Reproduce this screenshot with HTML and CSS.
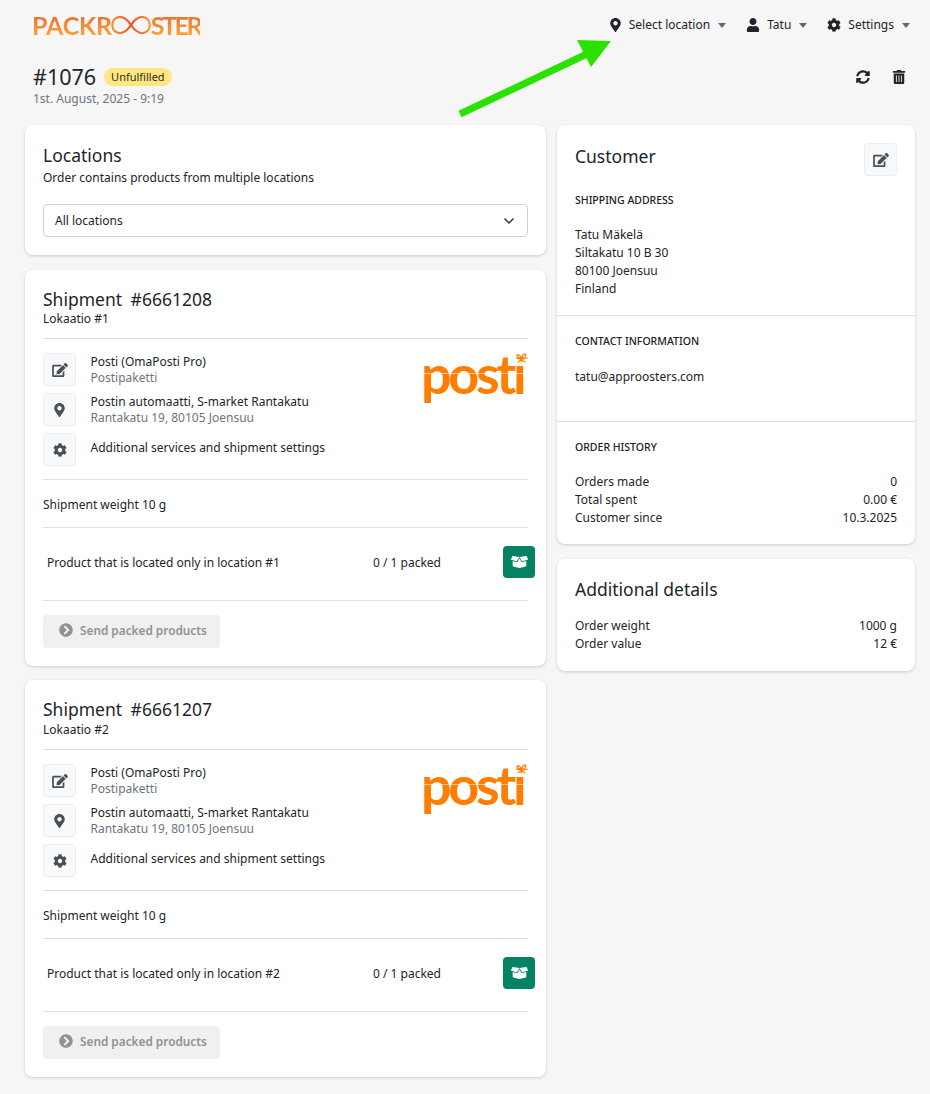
FILE: index.html
```html
<!DOCTYPE html>
<html lang="en">
<head>
<meta charset="utf-8">
<title>Order #1076</title>
<link rel="stylesheet" href="styles.css">
</head>
<body>
<svg class="defs" aria-hidden="true">
  <defs>
    <linearGradient id="logo-grad" gradientUnits="userSpaceOnUse" x1="0" y1="0" x2="40" y2="0"><stop offset="0" stop-color="#f59a3c"/><stop offset=".5" stop-color="#e4552a"/><stop offset="1" stop-color="#f8a03c"/></linearGradient>
    <symbol id="i-pin" viewBox="0 0 384 512"><path d="M172.268 501.67C26.97 291.031 0 262.429 0 192 0 85.961 85.961 0 192 0s192 85.961 192 192c0 70.429-26.97 99.031-172.268 309.67-9.535 13.774-29.93 13.773-39.464 0zM192 272c44.183 0 80-35.817 80-80s-35.817-80-80-80-80 35.817-80 80 35.817 80 80 80z"/></symbol>
    <symbol id="i-user" viewBox="0 0 448 512"><path d="M224 256c70.7 0 128-57.3 128-128S294.7 0 224 0 96 57.3 96 128s57.3 128 128 128zm89.6 32h-16.7c-22.2 10.2-46.9 16-72.9 16s-50.6-5.8-72.9-16h-16.7C60.2 288 0 348.2 0 422.4V464c0 26.5 21.5 48 48 48h352c26.5 0 48-21.5 48-48v-41.6c0-74.2-60.2-134.4-134.4-134.4z"/></symbol>
    <symbol id="i-cog" viewBox="0 0 512 512"><path d="M487.4 315.7l-42.6-24.6c4.3-23.2 4.3-47 0-70.2l42.6-24.6c4.9-2.8 7.1-8.6 5.5-14-11.1-35.6-30-67.8-54.7-94.6-3.8-4.1-10-5.1-14.8-2.3L380.8 110c-17.9-15.4-38.5-27.3-60.8-35.1V25.8c0-5.6-3.9-10.5-9.4-11.7-36.7-8.2-74.3-7.8-109.2 0-5.5 1.2-9.4 6.1-9.4 11.7V75c-22.2 7.9-42.8 19.8-60.8 35.1L88.7 85.5c-4.9-2.8-11-1.9-14.8 2.3-24.7 26.7-43.6 58.9-54.7 94.6-1.7 5.4.6 11.2 5.5 14L67.3 221c-4.3 23.2-4.3 47 0 70.2l-42.6 24.6c-4.9 2.8-7.1 8.6-5.5 14 11.1 35.6 30 67.8 54.7 94.6 3.8 4.1 10 5.1 14.8 2.3l42.6-24.6c17.9 15.4 38.5 27.3 60.8 35.1v49.2c0 5.6 3.9 10.5 9.4 11.7 36.7 8.2 74.3 7.8 109.2 0 5.5-1.2 9.4-6.1 9.4-11.7v-49.2c22.2-7.9 42.8-19.8 60.8-35.1l42.6 24.6c4.9 2.8 11 1.9 14.8-2.3 24.7-26.7 43.6-58.9 54.7-94.6 1.5-5.5-.7-11.3-5.6-14.1zM256 336c-44.1 0-80-35.9-80-80s35.9-80 80-80 80 35.9 80 80-35.9 80-80 80z"/></symbol>
    <symbol id="i-sync" viewBox="0 0 512 512"><path d="M370.72 133.28C339.458 104.008 298.888 87.962 255.848 88c-77.458.068-144.328 53.178-162.791 126.85-1.344 5.363-6.122 9.15-11.651 9.15H24.103c-7.498 0-13.194-6.807-11.807-14.176C33.933 94.924 134.813 8 256 8c66.448 0 126.791 26.136 171.315 68.685L463.03 40.97C478.149 25.851 504 36.559 504 57.941V192c0 13.255-10.745 24-24 24H345.941c-21.382 0-32.09-25.851-16.971-40.971l41.75-41.749zM32 296h134.059c21.382 0 32.09 25.851 16.971 40.971l-41.75 41.75c31.262 29.273 71.835 45.319 114.876 45.28 77.418-.07 144.315-53.144 162.787-126.849 1.344-5.363 6.122-9.15 11.651-9.15h57.304c7.498 0 13.194 6.807 11.807 14.176C478.067 417.076 377.187 504 256 504c-66.448 0-126.791-26.136-171.315-68.685L48.97 471.03C33.851 486.149 8 475.441 8 454.059V320c0-13.255 10.745-24 24-24z"/></symbol>
    <symbol id="i-trash" viewBox="0 0 448 512"><path d="M32 464a48 48 0 0 0 48 48h288a48 48 0 0 0 48-48V128H32zm272-256a16 16 0 0 1 32 0v224a16 16 0 0 1-32 0zm-96 0a16 16 0 0 1 32 0v224a16 16 0 0 1-32 0zm-96 0a16 16 0 0 1 32 0v224a16 16 0 0 1-32 0zM432 32H312l-9.4-18.7A24 24 0 0 0 281.1 0H166.8a23.72 23.72 0 0 0-21.4 13.3L136 32H16A16 16 0 0 0 0 48v32a16 16 0 0 0 16 16h416a16 16 0 0 0 16-16V48a16 16 0 0 0-16-16z"/></symbol>
    <symbol id="i-edit" viewBox="0 0 576 512"><path d="M402.6 83.2l90.2 90.2c3.8 3.8 3.8 10 0 13.8L274.4 405.6l-92.8 10.3c-12.4 1.4-22.9-9.1-21.5-21.5l10.3-92.8L388.8 83.2c3.8-3.8 10-3.8 13.8 0zm162-22.9l-48.8-48.8c-15.2-15.2-39.9-15.2-55.2 0l-35.4 35.4c-3.8 3.8-3.8 10 0 13.8l90.2 90.2c3.8 3.8 10 3.8 13.8 0l35.4-35.4c15.2-15.3 15.2-40 0-55.2zM384 346.2V448H64V128h229.8c3.2 0 6.2-1.3 8.5-3.5l40-40c7.6-7.6 2.2-20.5-8.5-20.5H48C21.5 64 0 85.5 0 112v352c0 26.5 21.5 48 48 48h352c26.5 0 48-21.5 48-48V306.2c0-10.7-12.9-16-20.5-8.5l-40 40c-2.2 2.3-3.5 5.3-3.5 8.5z"/></symbol>
    <symbol id="i-next" viewBox="0 0 512 512"><path d="M256 8c137 0 248 111 248 248S393 504 256 504 8 393 8 256 119 8 256 8zm113.9 231L234.4 103.5c-9.4-9.4-24.6-9.4-33.9 0l-17 17c-9.4 9.4-9.4 24.6 0 33.9L285.1 256 183.5 357.6c-9.4 9.4-9.4 24.6 0 33.9l17 17c9.4 9.4 24.6 9.4 33.9 0L369.9 273c9.4-9.4 9.4-24.6 0-34z"/></symbol>
    <symbol id="i-box" viewBox="0 0 640 512"><path d="M425.7 256c-16.9 0-32.8-9-41.4-23.4L320 126l-64.2 106.6c-8.7 14.5-24.6 23.5-41.5 23.5-4.5 0-9-.6-13.3-1.9L64 215v178c0 14.7 10 27.5 24.2 31l216.2 54.1c10.2 2.5 20.9 2.5 31 0L551.8 424c14.2-3.6 24.2-16.4 24.2-31V215l-137 39.1c-4.3 1.3-8.8 1.9-13.3 1.9zm212.6-112.2L586.8 41c-3.1-6.2-9.8-9.8-16.7-8.9L320 64l91.7 152.1c3.8 6.3 11.4 9.3 18.5 7.3l197.9-56.5c9.9-2.9 14.7-13.9 10.2-23.1zM53.2 41L1.7 143.8c-4.6 9.2.3 20.2 10.1 23l197.9 56.5c7.1 2 14.7-1 18.5-7.3L320 64 69.8 32.1c-6.9-.8-13.5 2.7-16.6 8.9z"/></symbol>
    <symbol id="i-bow" viewBox="0 0 24 16"><path d="M12 15 L12 8 M12 8 C8 1 4 2 5 5 C6 8 10 8 12 8 M12 8 C14 1 19 0 19 3 C19 7 14 8 12 8 M11 10 L3 8 M13 10 L22 8 M11 11 L6 15 M13 11 L18 15" fill="none" stroke="#ff7d00" stroke-width="2"/></symbol>
  </defs>
</svg>

<header class="topbar">
  <div class="logo">
    <span class="logo-text packr">PACKR</span>
    <svg class="logo-loop" viewBox="0 0 40 18"><path d="M20 9 C16 3 12.500 1 9 1 C4.500 1 1.200 4.500 1.200 9 C1.200 13.500 4.500 17 9 17 C12.500 17 16 15 20 9 C24 3 27.500 1 31 1 C35.500 1 38.800 4.500 38.800 9 C38.800 13.500 35.500 17 31 17 C27.500 17 24 15 20 9 Z" fill="none" stroke="url(#logo-grad)" stroke-width="2.200"/></svg>
    <span class="logo-text ster">STER</span>
  </div>
  <nav class="nav">
    <a class="nav-item"><svg class="nav-icon pin"><use href="#i-pin"/></svg><span>Select location</span><i class="caret"></i></a>
    <a class="nav-item"><svg class="nav-icon"><use href="#i-user"/></svg><span>Tatu</span><i class="caret"></i></a>
    <a class="nav-item"><svg class="nav-icon"><use href="#i-cog"/></svg><span>Settings</span><i class="caret"></i></a>
  </nav>
</header>

<svg class="arrow" viewBox="0 0 170 90"><path d="M1 73 L130 12" stroke="#2be100" stroke-width="7" fill="none"/><path d="M118 -1 L152 0 L132 26 Z" fill="#2be100"/></svg>

<section class="order-head">
  <div>
    <div class="order-title"><h1>#1076</h1><span class="badge">Unfulfilled</span></div>
    <div class="order-date">1st. August, 2025 - 9:19</div>
  </div>
  <div class="order-actions">
    <svg class="act"><use href="#i-sync"/></svg>
    <svg class="act"><use href="#i-trash"/></svg>
  </div>
</section>

<main class="columns">
  <div class="col">
    <section class="card pad">
      <h2>Locations</h2>
      <p class="sub">Order contains products from multiple locations</p>
      <div class="select"><span>All locations</span>
        <svg class="chev" viewBox="0 0 12 8"><path d="M1.500 1.500 L6 6 L10.500 1.500" fill="none" stroke="#343a40" stroke-width="1.500"/></svg>
      </div>
    </section>

    <section class="card pad shipment">
      <h2 class="ship-title">Shipment #6661208</h2>
      <p class="ship-loc">Lokaatio #1</p>
      <div class="carrier">
        <div class="carrier-rows">
          <div class="crow"><span class="ibtn"><svg class="ic-edit"><use href="#i-edit"/></svg></span><div><div>Posti (OmaPosti Pro)</div><div class="muted">Postipaketti</div></div></div>
          <div class="crow"><span class="ibtn"><svg class="ic-pin"><use href="#i-pin"/></svg></span><div><div>Postin automaatti, S-market Rantakatu</div><div class="muted">Rantakatu 19, 80105 Joensuu</div></div></div>
          <div class="crow"><span class="ibtn"><svg class="ic-cog"><use href="#i-cog"/></svg></span><div class="single">Additional services and shipment settings</div></div>
        </div>
        <div class="posti"><span>posti</span><svg class="bow"><use href="#i-bow"/></svg></div>
      </div>
      <div class="weight">Shipment weight 10 g</div>
      <div class="product"><span class="pname">Product that is located only in location #1</span><span class="pcount">0 / 1 packed</span><span class="pack"><svg><use href="#i-box"/></svg></span></div>
      <div class="send-row"><span class="send"><svg><use href="#i-next"/></svg>Send packed products</span></div>
    </section>

    <section class="card pad shipment">
      <h2 class="ship-title">Shipment #6661207</h2>
      <p class="ship-loc">Lokaatio #2</p>
      <div class="carrier">
        <div class="carrier-rows">
          <div class="crow"><span class="ibtn"><svg class="ic-edit"><use href="#i-edit"/></svg></span><div><div>Posti (OmaPosti Pro)</div><div class="muted">Postipaketti</div></div></div>
          <div class="crow"><span class="ibtn"><svg class="ic-pin"><use href="#i-pin"/></svg></span><div><div>Postin automaatti, S-market Rantakatu</div><div class="muted">Rantakatu 19, 80105 Joensuu</div></div></div>
          <div class="crow"><span class="ibtn"><svg class="ic-cog"><use href="#i-cog"/></svg></span><div class="single">Additional services and shipment settings</div></div>
        </div>
        <div class="posti"><span>posti</span><svg class="bow"><use href="#i-bow"/></svg></div>
      </div>
      <div class="weight">Shipment weight 10 g</div>
      <div class="product"><span class="pname">Product that is located only in location #2</span><span class="pcount">0 / 1 packed</span><span class="pack"><svg><use href="#i-box"/></svg></span></div>
      <div class="send-row"><span class="send"><svg><use href="#i-next"/></svg>Send packed products</span></div>
    </section>
  </div>

  <div class="col">
    <section class="card customer">
      <div class="cust-sec first">
        <div class="cust-head"><h2>Customer</h2><span class="ibtn"><svg class="ic-edit"><use href="#i-edit"/></svg></span></div>
        <h3>SHIPPING ADDRESS</h3>
        <p>Tatu Mäkelä<br>Siltakatu 10 B 30<br>80100 Joensuu<br>Finland</p>
      </div>
      <div class="cust-sec contact">
        <h3>CONTACT INFORMATION</h3>
        <p>tatu@approosters.com</p>
      </div>
      <div class="cust-sec history">
        <h3>ORDER HISTORY</h3>
        <dl class="kv"><dt>Orders made</dt><dd>0</dd><dt>Total spent</dt><dd>0.00 €</dd><dt>Customer since</dt><dd>10.3.2025</dd></dl>
      </div>
    </section>
    <section class="card pad details">
      <h2>Additional details</h2>
      <dl class="kv"><dt>Order weight</dt><dd>1000 g</dd><dt>Order value</dt><dd>12 €</dd></dl>
    </section>
  </div>
</main>
</body>
</html>
```

FILE: styles.css
```css
* { box-sizing: border-box; }
html, body { margin: 0; padding: 0; }
body {
  position: relative;
  background: #f6f6f6;
  color: #212529;
  font: 12px/18px "Noto Sans", sans-serif;
  min-height: 1094px;
  overflow: hidden;
}
.defs { position: absolute; width: 0; height: 0; }
h1, h2, h3, p, dl, dd { margin: 0; font-weight: 400; }

.topbar { height: 48px; display: flex; justify-content: space-between; align-items: center; padding: 1px 20px 0 32px; }
.logo { display: flex; align-items: center; height: 22px; margin-top: 1px; }
.logo-text {
  font: 700 25px/22px Lato, sans-serif;
  background: linear-gradient(#ec6b30, #fda537);
  -webkit-background-clip: text;
  background-clip: text;
  color: transparent;
}
.packr { letter-spacing: -.2px; }
.ster { letter-spacing: -2.500px; }
.logo-loop { width: 40px; height: 18px; margin: 0 0 0 -1px; }
.nav { display: flex; gap: 20px; align-items: center; }
.nav-item { display: flex; align-items: center; color: #212529; }
.nav-icon { width: 14px; height: 14px; margin-right: 7px; fill: #212529; }
.nav-icon.pin { width: 11px; margin-right: 8px; }
.caret { width: 0; height: 0; margin: 2px 0 0 8px; border: 4px solid transparent; border-top: 5px solid #666; border-bottom: 0; }

.arrow { position: absolute; left: 459px; top: 41px; width: 170px; height: 90px; overflow: visible; }

.order-head { display: flex; justify-content: space-between; padding: 16px 24px 0 33px; height: 77px; }
.order-title { display: flex; align-items: center; height: 26px; }
.order-title h1 { font-size: 21.500px; line-height: 26px; }
.badge { margin-left: 8px; background: #ffe680; color: #2e2e1a; font-size: 11px; line-height: 18px; height: 18px; padding: 0 7px; border-radius: 9px; }
.order-date { color: #6c757d; font-size: 12px; line-height: 18px; }
.order-actions { display: flex; gap: 22px; padding-top: 6px; }
.act { width: 14px; height: 14px; fill: #212529; }

.columns { display: grid; grid-template-columns: 521px 358px; gap: 11px; padding-left: 25px; }
.col { display: flex; flex-direction: column; gap: 15px; align-items: stretch; }
.card { background: #fff; border-radius: 8px; box-shadow: 0 1px 3px rgba(0,0,0,.18); }
.pad { padding: 18px; }
h2 { font-size: 17.500px; line-height: 24px; }
.sub { line-height: 22px; }
.select {
  display: flex; justify-content: space-between; align-items: center;
  height: 33px; margin-top: 15px; padding: 0 12px 0 11px;
  border: 1px solid #ced4da; border-radius: 4px; background: #fff;
}
.chev { width: 12px; height: 8px; }

.ship-title { word-spacing: 4px; margin-top: -1px; }
.ship-loc { line-height: 14px; margin-top: 1px; padding-bottom: 12px; border-bottom: 1px solid #dee2e6; }
.shipment + .shipment { margin-top: -1px; }
.shipment + .shipment .ship-loc { margin-top: 2px; }
.carrier { display: flex; justify-content: space-between; padding: 14px 0 13px; border-bottom: 1px solid #dee2e6; }
.carrier-rows { display: flex; flex-direction: column; gap: 7px; }
.crow { display: flex; gap: 14.500px; align-items: center; height: 33px; line-height: 16px; }
.single { padding-bottom: 3px; }
.muted { color: #6c757d; }
.ibtn { width: 33px; height: 33px; display: flex; flex: none; align-items: center; justify-content: center; background: #f8f9fa; border: 1px solid #ebedf0; border-radius: 4px; }
.ibtn svg { fill: #495057; }
.ic-edit { width: 16px; height: 14px; }
.ic-pin { width: 11px; height: 14px; }
.ic-cog { width: 14px; height: 14px; }
.posti { position: relative; color: #ff7d00; margin: -5px -1px 0 0; width: 105px; height: 60px; }
.posti span { display: block; margin-left: -3px; font: 700 54px/52px Lato, sans-serif; letter-spacing: -3.400px; }
.posti::after { content: ""; position: absolute; left: -3px; right: 6px; top: 25px; height: 1px; background: rgba(255,255,255,.55); }
.bow { position: absolute; right: 0; top: 5px; width: 15px; height: 10px; background: #fff; }
.weight { height: 48px; line-height: 50px; border-bottom: 1px solid #dee2e6; }
.product { display: grid; grid-template-columns: 326px 1fr 32px; align-items: center; height: 73px; margin-right: -7px; padding: 0 0 4px 4px; position: relative; }
.product::after { content: ""; position: absolute; left: 0; right: 7px; bottom: 0; border-bottom: 1px solid #dee2e6; }
.pack { width: 32px; height: 32px; margin-top: -1px; background: #058261; border-radius: 4px; display: flex; align-items: center; justify-content: center; }
.pack svg { width: 17px; height: 14px; fill: #fff; }
.send-row { padding-top: 14px; }
.send { display: inline-flex; align-items: center; gap: 7px; height: 33px; padding: 0 13px 3px 16px; background: #f0f0f0; border-radius: 4px; color: #8f9296; font-size: 11.800px; font-weight: 600; }
.send svg { width: 14px; height: 14px; fill: #8f9296; }

.customer { display: flex; flex-direction: column; }
.cust-sec { padding: 0 18px; border-bottom: 1px solid #dee2e6; }
.cust-sec:last-child { border-bottom: 0; }
.cust-head { display: flex; justify-content: space-between; align-items: flex-start; padding-top: 18px; height: 51px; }
.cust-head h2 { line-height: 26px; }
h3 { font-size: 10.500px; line-height: 16px; font-weight: 500; color: #1c2024; }
.first h3 { margin-top: 16px; }
.first { height: 191px; }
.first p { margin-top: 18px; }
.contact { height: 106px; padding-top: 17px; }
.contact p { margin-top: 19px; }
.history { height: 122px; padding-top: 17px; }
.kv { display: grid; grid-template-columns: 1fr auto; margin-top: 18px; }
.kv dd { text-align: right; }
.details .kv { margin-top: 16px; }
```
